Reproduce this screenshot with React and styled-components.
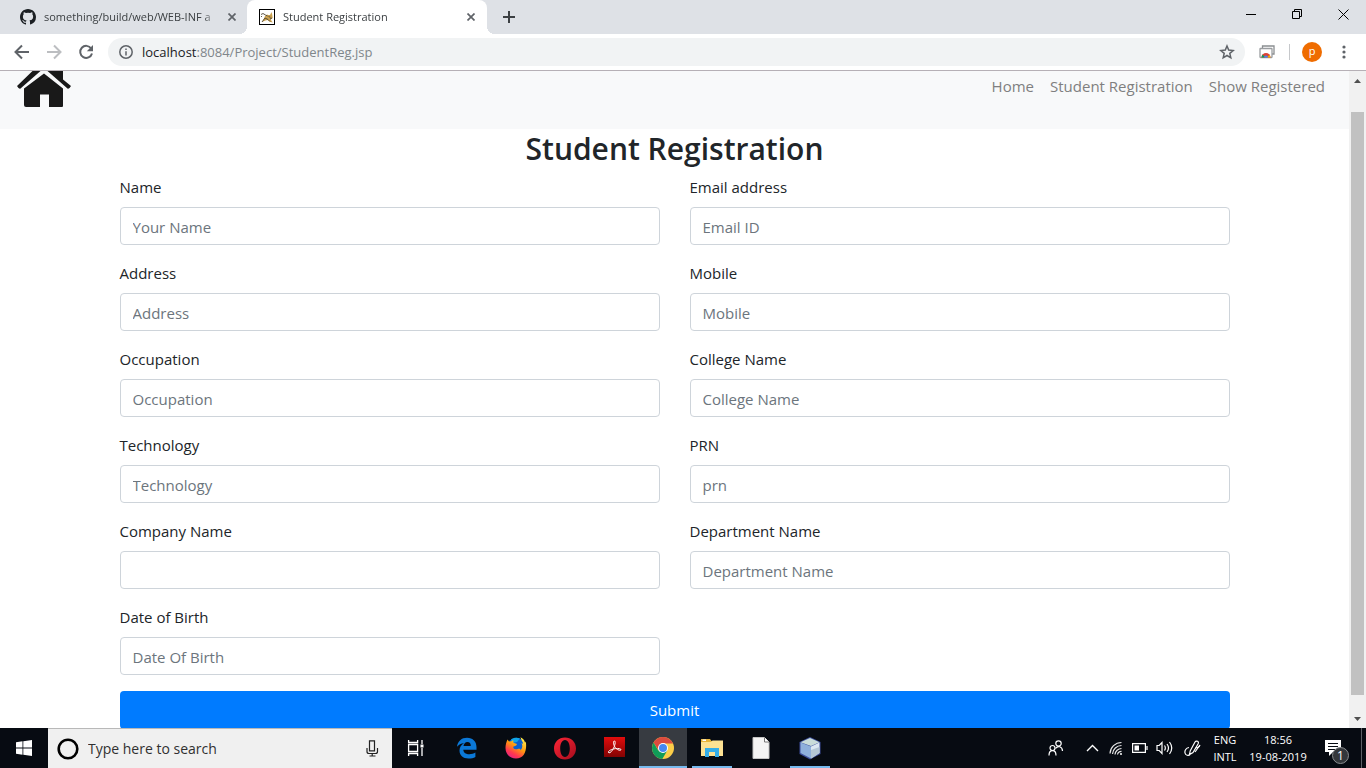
import React from "react";
import styled, { createGlobalStyle } from "styled-components";

const GlobalStyle = createGlobalStyle`
  *, *::before, *::after { box-sizing: border-box; }
  body {
    margin: 0;
    overflow: hidden;
    font-family: "Open Sans", "Noto Sans", sans-serif;
    font-size: 15px;
    line-height: 24px;
    color: #212529;
    background: #fff;
  }
  button { font: inherit; padding: 0; border: 0; background: none; color: inherit; }
  svg { display: block; flex: none; }
`;

const Screen = styled.div`
  display: flex;
  flex-direction: column;
  height: 100vh;
`;

/* ---------- browser window ---------- */

const TabStrip = styled.div`
  display: flex;
  flex: none;
  height: 34px;
  background: #dee1e6;
`;

const Tab = styled.div`
  position: relative;
  display: flex;
  align-items: center;
  gap: 8px;
  width: ${(p) => (p.$active ? 240 : 247)}px;
  padding: 0 10px 0 ${(p) => (p.$active ? 12 : 20)}px;
  font-size: 11px;
  line-height: 16px;
  color: #3c4043;
  background: ${(p) => (p.$active ? "#fff" : "transparent")};
  border-radius: 8px 8px 0 0;

  &::before,
  &::after {
    content: "";
    display: ${(p) => (p.$active ? "block" : "none")};
    position: absolute;
    bottom: 0;
    width: 8px;
    height: 8px;
  }
  &::before {
    right: 100%;
    background: radial-gradient(circle at 0 0, transparent 8px, #fff 8px);
  }
  &::after {
    left: 100%;
    background: radial-gradient(circle at 100% 0, transparent 8px, #fff 8px);
  }
`;

const TabTitle = styled.span`
  flex: 1;
  min-width: 0;
  overflow: hidden;
  white-space: nowrap;
  mask-image: linear-gradient(to right, #000 calc(100% - 16px), transparent);
`;

const IconButton = styled.button`
  display: flex;
  align-items: center;
  justify-content: center;
  flex: none;
  width: ${(p) => p.$width || 32}px;
  height: ${(p) => p.$height || 32}px;
`;

const WindowControls = styled.div`
  display: flex;
  margin-left: auto;
`;

const Toolbar = styled.div`
  display: flex;
  align-items: center;
  flex: none;
  height: 37px;
  padding: 0 6px;
  background: #fff;
  border-bottom: 1px solid #b6b0b6;
`;

const AddressBar = styled.div`
  display: flex;
  flex: 1;
  align-items: center;
  gap: 9px;
  height: 28px;
  margin: 0 6px;
  padding: 0 2px 0 11px;
  border-radius: 14px;
  background: #f1f3f4;
`;

const Url = styled.span`
  flex: 1;
  font-size: 13px;
  line-height: 20px;
  color: #80868b;
`;

const Host = styled.span`
  color: #202124;
`;

const Divider = styled.span`
  width: 1px;
  height: 16px;
  margin: 0 6px;
  background: #c6c8cb;
`;

const Avatar = styled.span`
  width: 20px;
  height: 20px;
  border-radius: 50%;
  background: #ef6c00;
  color: #fff;
  font-size: 11px;
  line-height: 18px;
  text-align: center;
`;

/* ---------- web page ---------- */

const Viewport = styled.div`
  display: flex;
  flex: 1;
  min-height: 0;
`;

const Page = styled.div`
  flex: 1;
  min-width: 0;
  overflow: hidden;
`;

const Navbar = styled.nav`
  display: flex;
  justify-content: space-between;
  align-items: flex-start;
  height: 58px;
  padding: 0 24px 0 16px;
  background: #f8f9fa;
`;

const Brand = styled.a`
  display: block;
`;

const NavLinks = styled.div`
  display: flex;
  gap: 16px;
  padding-top: 3px;
`;

const NavLink = styled.a`
  color: #7f7f80;
  text-decoration: none;
`;

const Container = styled.main`
  max-width: 1140px;
  margin: 0 auto;
  padding: 0 15px;
`;

const Title = styled.h2`
  margin: 0 0 8px;
  padding-top: 2px;
  font-size: 30px;
  font-weight: 600;
  line-height: 36px;
  text-align: center;
`;

const Fields = styled.div`
  display: grid;
  grid-template-columns: 1fr 1fr;
  gap: 16px 30px;
  margin-bottom: 16px;
`;

const Field = styled.div`
  display: flex;
  flex-direction: column;
  gap: 8px;
`;

const Label = styled.label`
  line-height: 24px;
`;

const Input = styled.input`
  width: 100%;
  height: 38px;
  padding: 7px 12px 5px;
  border: 1px solid #ced4da;
  border-radius: 4px;
  background: #fff;
  color: #495057;
  font: inherit;

  &::placeholder {
    color: #6c757d;
    opacity: 1;
  }
`;

const SubmitButton = styled.button`
  display: block;
  width: 100%;
  height: 38px;
  border-radius: 4px;
  background: #007bff;
  color: #fff;
`;

const ScrollTrack = styled.div`
  display: flex;
  flex-direction: column;
  align-items: center;
  flex: none;
  width: 17px;
  padding: 4px 0;
  background: #f1f1f1;
`;

const ScrollRail = styled.div`
  flex: 1;
  width: 13px;
  padding: 26px 0 17px;
`;

const ScrollThumb = styled.div`
  height: 100%;
  background: #c1c1c1;
`;

/* ---------- taskbar ---------- */

const Taskbar = styled.div`
  display: flex;
  flex: none;
  height: 40px;
  background: #070b12;
  color: #fff;
`;

const SearchBox = styled.div`
  display: flex;
  align-items: center;
  gap: 9px;
  width: 344px;
  padding: 0 13px 0 9px;
  background: #f0f0f0;
  border-top: 1px solid #b8b8b8;
`;

const SearchInput = styled.input`
  flex: 1;
  min-width: 0;
  padding: 0;
  border: 0;
  background: transparent;
  font: inherit;
  font-size: 14px;

  &::placeholder {
    color: #303030;
    opacity: 1;
  }
`;

const Apps = styled.div`
  display: flex;
  gap: 1px;
  margin-left: 3px;
`;

const AppButton = styled.button`
  display: flex;
  align-items: center;
  justify-content: center;
  width: 48px;
  height: 40px;
  background:
    linear-gradient(#76b9ed, #76b9ed) center bottom /
      ${(p) => (p.$active ? "48px" : p.$running ? "40px" : "0")} 2px no-repeat,
    ${(p) => (p.$active ? "#373b41" : "transparent")};
`;

const Tray = styled.div`
  display: flex;
  align-items: center;
  margin-left: auto;
`;

const TrayText = styled.div`
  width: ${(p) => p.$width}px;
  font-size: 11px;
  line-height: 17px;
  text-align: center;
  white-space: nowrap;
`;

const Notifications = styled.button`
  position: relative;
  display: flex;
  justify-content: center;
  align-items: center;
  width: 47px;
  height: 40px;
  padding-right: 10px;
`;

const Count = styled.span`
  position: absolute;
  left: 18px;
  top: 19px;
  width: 17px;
  height: 17px;
  border: 1px solid #8a8d90;
  border-radius: 50%;
  background: #34373b;
  font-size: 12px;
  line-height: 15px;
`;

const ShowDesktop = styled.button`
  width: 5px;
  height: 40px;
  border-left: 1px solid #5c6066;
`;

/* ---------- drawings ---------- */

const CloseX = () => (
  <svg width="8" height="8" viewBox="0 0 8 8" stroke="#5f6368" strokeWidth="1.7">
    <path d="M.5.5l7 7M7.5.5l-7 7" />
  </svg>
);

const GitHubMark = () => (
  <svg width="16" height="16" viewBox="0 0 16 16" fill="#1b1f23">
    <path d="M8 0C3.58 0 0 3.58 0 8c0 3.54 2.29 6.53 5.47 7.59.4.07.55-.17.55-.38v-1.49c-2.23.48-2.7-1.07-2.7-1.07-.36-.92-.89-1.17-.89-1.17-.73-.5.06-.49.06-.49.8.06 1.23.83 1.23.83.71 1.22 1.87.87 2.33.66.07-.52.28-.87.51-1.07-1.78-.2-3.64-.89-3.64-3.95 0-.87.31-1.59.82-2.15-.08-.2-.36-1.02.08-2.12 0 0 .67-.21 2.2.82a7.6 7.6 0 0 1 4 0c1.53-1.04 2.2-.82 2.2-.82.44 1.1.16 1.92.08 2.12.51.56.82 1.27.82 2.15 0 3.07-1.87 3.75-3.65 3.95.29.25.54.73.54 1.48v2.2c0 .21.15.46.55.38A8 8 0 0 0 16 8c0-4.42-3.58-8-8-8z" />
  </svg>
);

const TomcatIcon = () => (
  <svg width="16" height="16" viewBox="0 0 16 16">
    <rect x=".5" y=".5" width="15" height="15" fill="#fff" stroke="#000" />
    <path d="M8 5.500l1.200.6 1.800-.2L12.500 3l.8 3 .4 3-2 1.500 2 3-3-.8-2.200-1.700-2 .5-3.500 1.500 2-3.500L6 7z" fill="#cba14e" />
    <path d="M2 5.500l2-1 2.500 1.500 2 1M3 7l-1 1M3 13l3-4 3 1.500 2 2M9.500 7.500l2 .8M13 9l-2 1" stroke="#4e4637" strokeWidth=".9" fill="none" />
  </svg>
);

const Arrow = ({ flip, color }) => (
  <svg width="16" height="16" viewBox="0 0 16 16" fill="none" stroke={color} strokeWidth="2">
    <path d={flip ? "M1 8h13M8 1.500L14.500 8 8 14.500" : "M15 8H2M8 1.500L1.500 8 8 14.500"} />
  </svg>
);

const Reload = () => (
  <svg width="16" height="16" viewBox="0 0 16 16" fill="none" stroke="#5f6368" strokeWidth="2">
    <path d="M13.200 4.500A6 6 0 1 0 14 9.500" />
    <path d="M15 1v6.200H8.800z" fill="#5f6368" stroke="none" />
  </svg>
);

const Info = () => (
  <svg width="14" height="14" viewBox="0 0 14 14" fill="none" stroke="#5f6368" strokeWidth="1.500">
    <circle cx="7" cy="7" r="6.200" />
    <path d="M7 6.200v4.300M7 3.500v1.500" />
  </svg>
);

const Star = () => (
  <svg width="16" height="16" viewBox="0 0 16 16" fill="none" stroke="#5f6368" strokeWidth="1.500">
    <path d="M8 2l1.700 4.100 4.500.4-3.400 2.900 1 4.400L8 11.500l-3.800 2.300 1-4.400L1.800 6.500l4.500-.4z" />
  </svg>
);

const TabsExtension = () => (
  <svg width="16" height="16" viewBox="0 0 16 16">
    <path d="M3.500 4V2h11.500v8h-2" fill="none" stroke="#8b8e91" strokeWidth="1.300" />
    <rect x="1" y="4.500" width="12" height="9" rx=".5" fill="#fff" stroke="#9a9da0" strokeWidth="1.300" />
    <path d="M2.500 13.500a4.500 4.500 0 0 1 9 0z" fill="#db4437" />
    <path d="M2.500 13.500a4.500 4.500 0 0 1 1.300-3L6 13.500z" fill="#0f9d58" />
    <path d="M11.500 13.500a4.500 4.500 0 0 0-1-2.500L8 13.500z" fill="#f4b400" />
    <path d="M5 13.500a2 2 0 0 1 4 0z" fill="#4285f4" />
  </svg>
);

const Dots = () => (
  <svg width="4" height="14" viewBox="0 0 4 14" fill="#5f6368">
    <circle cx="2" cy="2" r="1.600" />
    <circle cx="2" cy="7" r="1.600" />
    <circle cx="2" cy="12" r="1.600" />
  </svg>
);

const House = () => (
  <svg width="56" height="37" viewBox="0 0 56 37" fill="#191919">
    <path d="M8 17.500L28 2.500l19 15V35q0 1-1 1H33V23.500h-9V36H10q-2 0-2-2z" />
    <path d="M16.500 0h8L4.500 17.500Q3 18.500 1 15zM31.500 0H47v8.500l8 6.500q-2 3.500-3.500 2.500z" />
  </svg>
);

const Windows = () => (
  <svg width="16" height="16" viewBox="0 0 16 16" fill="#fff">
    <path d="M0 2.200L6.500 1.300v6.200H0zM7.300 1.200L16 0v7.500H7.300zM0 8.400h6.500v6.300L0 13.800zM7.300 8.400H16V16l-8.700-1.200z" />
  </svg>
);

const Cortana = () => (
  <svg width="22" height="22" viewBox="0 0 22 22" fill="none">
    <circle cx="11" cy="11" r="9.300" stroke="#000" strokeWidth="2.600" />
  </svg>
);

const Mic = () => (
  <svg width="13" height="17" viewBox="0 0 13 17" fill="none" stroke="#222" strokeWidth="1.200">
    <path d="M3.500.8h5v10h-5zM1 8v3.500q0 2 2 2h6.500q2 0 2-2V8M6.200 13.500V16M3.500 16h6" />
  </svg>
);

const TaskView = () => (
  <svg width="18" height="16" viewBox="0 0 18 16" fill="none" stroke="#fff" strokeWidth="1.300">
    <path d="M1.600 0v2.500h9V0M1.600 4.500h9v7h-9zM1.600 16v-2.500h9V16M15 0v4M15 8v8" />
    <path d="M13.500 4.500h3v3h-3z" fill="#fff" stroke="none" />
  </svg>
);

const Edge = () => (
  <svg width="22" height="22" viewBox="0 0 22 22" fill="#0b78d7">
    <path d="M1 9.800C1.700 4.200 5.600.8 11 .8c6 0 9.500 4 9.500 9.300v2.700H7.300c.2 3 2.600 4.500 6 4.500 2.400 0 4.400-.7 6.100-1.700v4.300C17.600 21 15.200 21.500 12.500 21.500 6.800 21.500 3.500 18.200 3.500 13.500c0-3.200 1.700-6 4.600-7.300C4.900 6.300 2.600 7.800 1 9.800zM7.500 9h7.300c0-2.600-1.100-4-3.400-4C9.200 5 7.800 6.700 7.500 9z" />
  </svg>
);

const Firefox = () => (
  <svg width="22" height="22" viewBox="0 0 22 22">
    <defs>
      <linearGradient id="ff" x1=".8" y1="0" x2=".2" y2="1">
        <stop offset="0" stopColor="#fff44f" />
        <stop offset=".45" stopColor="#ff980e" />
        <stop offset=".75" stopColor="#ff3750" />
        <stop offset="1" stopColor="#e0208a" />
      </linearGradient>
    </defs>
    <circle cx="11.500" cy="9.500" r="8.800" fill="#0a5fd0" />
    <path d="M6 2.500C8 .8 12 .2 15 1.500L12 5 7 6z" fill="#10a5e8" />
    <path d="M2.500 2.500L4 4.500l2.500-.2 1.700-1.300.2 2.800 3.600 1.200-.8 1.500-3 1.200c0 2.300 2 3 4.500 2.200 2-.7 3.300.2 2.500 1.600 2.200-1.800 2.700-5 1.300-7.500.8.300 1.200.7 1.700 1.200C18.200 4.500 16 3.300 15.500.2c3 1.300 4.300 3.800 4.500 5.500l.8-1.200c1.500 9-1.800 17-9.800 17C4.500 21.500.5 16.800.5 11c0-3 .8-6 2-8.500z" fill="url(#ff)" />
  </svg>
);

const Opera = () => (
  <svg width="24" height="23" viewBox="0 0 24 23">
    <defs>
      <linearGradient id="op" x1="0" y1="0" x2="1" y2="1">
        <stop offset="0" stopColor="#ff2637" />
        <stop offset="1" stopColor="#a30c1c" />
      </linearGradient>
    </defs>
    <path fillRule="evenodd" fill="url(#op)" d="M12 .5C5.800.5 1 5 1 11.500s4.800 11 11 11 11-4.500 11-11S18.200.5 12 .5zM12 3c3 0 4.800 3.700 4.800 8.500S15 20 12 20s-4.800-3.700-4.800-8.500S9 3 12 3z" />
  </svg>
);

const Acrobat = () => (
  <svg width="21" height="22" viewBox="0 0 21 22">
    <defs>
      <linearGradient id="ac" x1="0" y1="0" x2="0" y2="1">
        <stop offset="0" stopColor="#e20c0c" />
        <stop offset="1" stopColor="#820303" />
      </linearGradient>
    </defs>
    <rect width="21" height="20" fill="url(#ac)" />
    <path d="M4.500 15.500c-1-1.500 3-3 5-3.500 2.500-.7 6-.8 7.300.2 1.200 1.500-2.500 1.500-4.700-.7C10.200 9.500 8.700 6 10 4c1.700-.7 1.300 2.800.3 5.500C9 13 6 17 4.500 15.500z" fill="none" stroke="#fff" strokeWidth="1" />
  </svg>
);

const Chrome = () => (
  <svg width="22" height="22" viewBox="0 0 22 22">
    <circle cx="11" cy="11" r="11" fill="#fbcd48" />
    <path d="M1.500 5.500A11 11 0 0 1 20.500 5.500L21 6.500H11L6.700 13.500z" fill="#db4b3e" />
    <path d="M1.500 5.500A11 11 0 0 0 10.300 22L15.300 13.500H6.300z" fill="#109c58" />
    <circle cx="11" cy="11" r="5" fill="#fff" />
    <circle cx="11" cy="11" r="4" fill="#4688f1" />
  </svg>
);

const Explorer = () => (
  <svg width="22" height="20" viewBox="0 0 22 20">
    <path d="M0 1h9l1.500 2H22v15H0z" fill="#e8b53a" />
    <path d="M0 4h10l1.500-1.500H22V18H0z" fill="#fde293" />
    <path d="M1.500 1.500H5V3H1.500z" fill="#fff" />
    <path d="M4 19v-9h14v9h-4v-5H8v5z" fill="#35aee8" />
  </svg>
);

const FileIcon = () => (
  <svg width="18" height="22" viewBox="0 0 18 22">
    <path d="M1 .5h11.500L17 5v16.500H1z" fill="#f4f4f4" stroke="#c5c5c5" />
    <path d="M12.500.5V5H17" fill="#fff" stroke="#777" />
  </svg>
);

const Cube = () => (
  <svg width="24" height="24" viewBox="0 0 24 24">
    <path d="M12 1l10.500 5v12L12 23.500 1.500 18V6z" fill="#3e4f9c" />
    <path d="M12 2l9.500 4.300L13 10 2.500 6.300z" fill="#c9dcda" />
    <path d="M2.500 6.500L13 10.500V22.500L2.500 17z" fill="#8fb0dc" />
    <path d="M13 10.500l8.500-4V17L13 22.500z" fill="#dbe7f2" />
    <path d="M13 14l8.500-3v6L13 22.500z" fill="#b4c7d6" />
  </svg>
);

const People = () => (
  <svg width="16" height="16" viewBox="0 0 16 16" fill="none" stroke="#fff" strokeWidth="1.200">
    <circle cx="10.500" cy="3.500" r="2.700" />
    <circle cx="4.500" cy="8" r="2.500" />
    <path d="M1 15.500c0-6.500 7-6.500 7 0M7.500 8.500c2.500-3.500 6.800-2 7 2.500" />
  </svg>
);

const Chevron = () => (
  <svg width="13" height="8" viewBox="0 0 13 8" fill="none" stroke="#fff" strokeWidth="1.400">
    <path d="M1 7l5.500-5.500L12 7" />
  </svg>
);

const Wifi = () => (
  <svg width="14" height="14" viewBox="0 0 14 14" fill="none" stroke="#e8e8e8" strokeWidth="1.200">
    <path d="M1 12.500A11.500 11.500 0 0 1 12.500 1.500M3.500 13a9 9 0 0 1 9-8.500M6 13.500a6.500 6.500 0 0 1 6.500-6M8.500 13.500a4 4 0 0 1 4-3.200" />
    <circle cx="12" cy="13" r="1" fill="#fff" stroke="none" />
  </svg>
);

const Battery = () => (
  <svg width="16" height="10" viewBox="0 0 16 10" fill="none" stroke="#fff" strokeWidth="1.200">
    <path d="M.6.600h12.800v8.800H.6zM15 3v4" />
    <path d="M2.500 2.500h4.500v5H2.500z" fill="#fff" stroke="none" />
  </svg>
);

const Volume = () => (
  <svg width="17" height="14" viewBox="0 0 17 14" fill="none" stroke="#fff" strokeWidth="1.200">
    <path d="M1 4.500h2.200L6 1.500v11L3.200 9.500H1zM8.500 4.500q1.700 2.500 0 5M11 3q3 4 0 8M13.500 1q4.500 6 0 12" />
  </svg>
);

const Pen = () => (
  <svg width="17" height="17" viewBox="0 0 17 17" fill="none" stroke="#fff" strokeWidth="1.200">
    <path d="M5.500 14.500l.7-3.500L11 2q1-1.500 2.500-.7T14 4L9 12.500zM11 12l5-7" />
    <path d="M5 7.500c-3 .5-4.500 3-4 5.500s3.500 3 5 1.500M11.500 8c3-.5 4.500-1.500 4-3" />
  </svg>
);

const Message = () => (
  <svg width="16" height="17" viewBox="0 0 16 17">
    <path d="M0 0h16v12H8l-4 4v-4H0z" fill="#fff" />
    <path d="M3 3.500h10M3 6.500h10M3 9.500h7" stroke="#070b12" strokeWidth="1.100" />
  </svg>
);

const fields = [
  ["name", "Name", "Your Name"],
  ["email", "Email address", "Email ID"],
  ["address", "Address", "Address"],
  ["mobile", "Mobile", "Mobile"],
  ["occupation", "Occupation", "Occupation"],
  ["college", "College Name", "College Name"],
  ["technology", "Technology", "Technology"],
  ["prn", "PRN", "prn"],
  ["company", "Company Name", ""],
  ["department", "Department Name", "Department Name"],
  ["dob", "Date of Birth", "Date Of Birth"],
];

const apps = [
  ["Edge", Edge],
  ["Firefox", Firefox],
  ["Opera", Opera],
  ["Acrobat Reader", Acrobat],
  ["Chrome", Chrome, "active"],
  ["File Explorer", Explorer, "running"],
  ["Document", FileIcon],
  ["NetBeans", Cube, "running"],
];

export default function App() {
  return (
    <Screen>
      <GlobalStyle />
      <TabStrip>
        <Tab>
          <GitHubMark />
          <TabTitle>something/build/web/WEB-INF a</TabTitle>
          <IconButton $width={10} $height={16} aria-label="Close tab"><CloseX /></IconButton>
        </Tab>
        <Tab $active>
          <TomcatIcon />
          <TabTitle>Student Registration</TabTitle>
          <IconButton $width={12} $height={16} aria-label="Close tab"><CloseX /></IconButton>
        </Tab>
        <IconButton $width={44} $height={34} aria-label="New tab">
          <svg width="12" height="12" viewBox="0 0 12 12" stroke="#3c4043" strokeWidth="2"><path d="M6 0v12M0 6h12" /></svg>
        </IconButton>
        <WindowControls>
          <IconButton $width={46} $height={28} aria-label="Minimize">
            <svg width="10" height="10" viewBox="0 0 10 10" stroke="#000"><path d="M0 5.500h10" /></svg>
          </IconButton>
          <IconButton $width={46} $height={28} aria-label="Restore">
            <svg width="10" height="10" viewBox="0 0 10 10" fill="none" stroke="#000"><path d="M.5 2.500h7v7h-7zM2.500 2.500v-2h7v7h-2" /></svg>
          </IconButton>
          <IconButton $width={46} $height={28} aria-label="Close window">
            <svg width="11" height="11" viewBox="0 0 11 11" stroke="#000"><path d="M.5.5l10 10M10.500.5l-10 10" /></svg>
          </IconButton>
        </WindowControls>
      </TabStrip>
      <Toolbar>
        <IconButton aria-label="Back"><Arrow color="#5f6368" /></IconButton>
        <IconButton aria-label="Forward"><Arrow flip color="#bcbec1" /></IconButton>
        <IconButton aria-label="Reload"><Reload /></IconButton>
        <AddressBar>
          <Info />
          <Url><Host>localhost</Host>:8084/Project/StudentReg.jsp</Url>
          <IconButton $height={28} aria-label="Bookmark"><Star /></IconButton>
        </AddressBar>
        <IconButton aria-label="Extension"><TabsExtension /></IconButton>
        <Divider />
        <IconButton aria-label="Profile"><Avatar>p</Avatar></IconButton>
        <IconButton aria-label="Menu"><Dots /></IconButton>
      </Toolbar>

      <Viewport>
        <Page>
          <Navbar>
            <Brand href="#" aria-label="Home page"><House /></Brand>
            <NavLinks>
              <NavLink href="#">Home</NavLink>
              <NavLink href="#">Student Registration</NavLink>
              <NavLink href="#">Show Registered</NavLink>
            </NavLinks>
          </Navbar>
          <Container>
            <Title>Student Registration</Title>
            <form onSubmit={(e) => e.preventDefault()}>
              <Fields>
                {fields.map(([id, label, placeholder]) => (
                  <Field key={id}>
                    <Label htmlFor={id}>{label}</Label>
                    <Input id={id} placeholder={placeholder} />
                  </Field>
                ))}
              </Fields>
              <SubmitButton type="submit">Submit</SubmitButton>
            </form>
          </Container>
        </Page>
        <ScrollTrack>
          <svg width="9" height="11" viewBox="0 0 9 11" fill="#505050"><path d="M1 8l3.500-4L8 8z" /></svg>
          <ScrollRail><ScrollThumb /></ScrollRail>
          <svg width="9" height="12" viewBox="0 0 9 12" fill="#505050"><path d="M1 5h7L4.500 9z" /></svg>
        </ScrollTrack>
      </Viewport>

      <Taskbar>
        <IconButton $width={48} $height={40} aria-label="Start"><Windows /></IconButton>
        <SearchBox>
          <Cortana />
          <SearchInput aria-label="Search" placeholder="Type here to search" />
          <Mic />
        </SearchBox>
        <IconButton $width={48} $height={40} aria-label="Task view"><TaskView /></IconButton>
        <Apps>
          {apps.map(([name, Icon, state]) => (
            <AppButton key={name} aria-label={name} $active={state === "active"} $running={state === "running"}>
              <Icon />
            </AppButton>
          ))}
        </Apps>
        <Tray>
          <IconButton $width={48} $height={40} aria-label="People"><People /></IconButton>
          <IconButton $width={24} $height={40} aria-label="Hidden icons"><Chevron /></IconButton>
          <IconButton $width={24} $height={40} aria-label="Network"><Wifi /></IconButton>
          <IconButton $width={24} $height={40} aria-label="Battery"><Battery /></IconButton>
          <IconButton $width={24} $height={40} aria-label="Volume"><Volume /></IconButton>
          <IconButton $width={32} $height={40} aria-label="Pen"><Pen /></IconButton>
          <TrayText $width={34}>ENG<br />INTL</TrayText>
          <TrayText $width={72}>18:56<br />19-08-2019</TrayText>
          <Notifications aria-label="Notifications"><Message /><Count>1</Count></Notifications>
          <ShowDesktop aria-label="Show desktop" />
        </Tray>
      </Taskbar>
    </Screen>
  );
}
